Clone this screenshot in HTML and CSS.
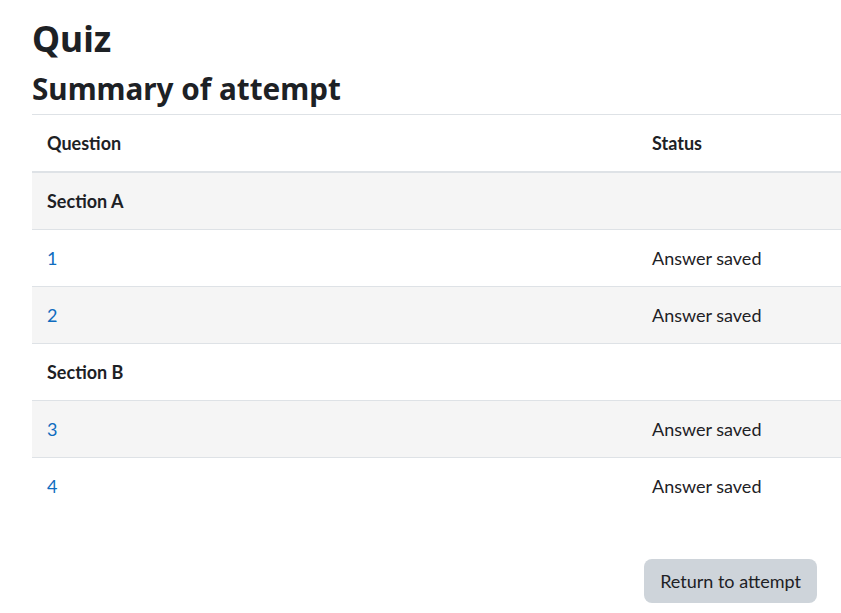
FILE: index.html
```html
<!DOCTYPE html>
<html lang="en">
<head>
    <meta charset="UTF-8">
    <title>Quiz: Summary of attempt</title>
    <link rel="stylesheet" href="styles.css">
</head>
<body>
    <div class="page">
        <h1>Quiz</h1>
        <h2>Summary of attempt</h2>

        <table class="summary">
            <thead>
                <tr>
                    <th class="c-question">Question</th>
                    <th class="c-status">Status</th>
                </tr>
            </thead>
            <tbody>
                <tr class="section stripe">
                    <th colspan="2">Section A</th>
                </tr>
                <tr>
                    <td><a href="#">1</a></td>
                    <td>Answer saved</td>
                </tr>
                <tr class="stripe">
                    <td><a href="#">2</a></td>
                    <td>Answer saved</td>
                </tr>
                <tr class="section">
                    <th colspan="2">Section B</th>
                </tr>
                <tr class="stripe">
                    <td><a href="#">3</a></td>
                    <td>Answer saved</td>
                </tr>
                <tr class="last">
                    <td><a href="#">4</a></td>
                    <td>Answer saved</td>
                </tr>
            </tbody>
        </table>

        <div class="controls">
            <button class="btn">Return to attempt</button>
        </div>
    </div>
</body>
</html>
```

FILE: styles.css
```css
body {
    margin: 0;
    font-family: Lato, "Noto Sans", sans-serif;
    font-size: 18px;
    color: #1d2125;
    background: #fff;
    overflow: hidden;
}
.page {
    padding: 17px 0 0 32px;
}
h1,
h2 {
    font-family: "Noto Sans", sans-serif;
    font-weight: 700;
    line-height: 1.2;
}
h1 {
    font-size: 35.5px;
    margin: 0 0 11px;
}
h2 {
    font-size: 29.7px;
    margin: 0 0 8px;
}
.summary {
    width: 809px;
    border-collapse: collapse;
}
.summary th,
.summary td {
    text-align: left;
    padding: 15px 15px;
    line-height: 26px;
    border-top: 1px solid #dee2e6;
}
.summary th {
    font-weight: 700;
}
.summary thead th {
    border-bottom: 2px solid #dee2e6;
}
.c-question {
    width: 575px;
}
.summary tr.stripe {
    background: #f5f5f5;
}
.summary a {
    color: #0f6cbf;
    text-decoration: none;
}
.controls {
    display: flex;
    justify-content: flex-end;
    padding: 45px 24px 0 0;
}
.btn {
    font-family: inherit;
    font-size: 18px;
    color: #1d2125;
    background: #ced4da;
    border: none;
    border-radius: 8px;
    padding: 9px 16px;
    line-height: 26px;
}
```
